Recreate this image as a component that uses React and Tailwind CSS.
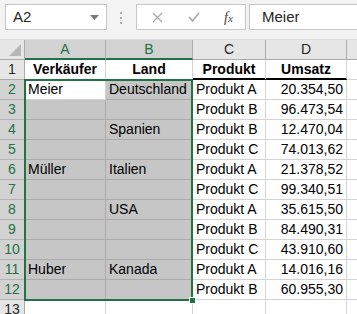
import React from 'react';

const rows = [
  ['Meier', 'Deutschland', 'Produkt A', '20.354,50'],
  ['', '', 'Produkt B', '96.473,54'],
  ['', 'Spanien', 'Produkt B', '12.470,04'],
  ['', '', 'Produkt C', '74.013,62'],
  ['Müller', 'Italien', 'Produkt A', '21.378,52'],
  ['', '', 'Produkt C', '99.340,51'],
  ['', 'USA', 'Produkt A', '35.615,50'],
  ['', '', 'Produkt B', '84.490,31'],
  ['', '', 'Produkt C', '43.910,60'],
  ['Huber', 'Kanada', 'Produkt A', '14.016,16'],
  ['', '', 'Produkt B', '60.955,30'],
];

const cols = ['A', 'B', 'C', 'D'];

const FormulaBar = () => (
  <div className="h-[40px] bg-[#f3f3f3] flex items-start pt-[4px] border-b border-[#dadada]">
    <div className="ml-[5px] w-[102px] h-[26px] border border-[#c6c6c6] bg-white flex items-center justify-between pl-[7px] pr-[7px]">
      <span className="text-[15px] text-[#262626]">A2</span>
      <svg width="9" height="5" viewBox="0 0 9 5"><path d="M0 0h9L4.5 5z" fill="#7a7a7a" /></svg>
    </div>
    <div className="ml-[13px] mt-[8px] flex flex-col gap-[3px]">
      <span className="w-[2px] h-[2px] bg-[#b0b0b0]" />
      <span className="w-[2px] h-[2px] bg-[#b0b0b0]" />
      <span className="w-[2px] h-[2px] bg-[#b0b0b0]" />
    </div>
    <div className="ml-[14px] w-[110px] h-[26px] border border-[#c6c6c6] bg-white flex items-center">
      <svg className="ml-[15px]" width="11" height="11" viewBox="0 0 11 11"><path d="M1 1l9 9M10 1l-9 9" stroke="#a8a8a8" strokeWidth="1.3" /></svg>
      <svg className="ml-[25px]" width="12" height="10" viewBox="0 0 12 10"><path d="M1 5l3.5 4L11 1" stroke="#a8a8a8" strokeWidth="1.6" fill="none" /></svg>
      <span className="ml-[24px] text-[14px] italic text-[#444] font-['Liberation_Serif',serif]">f<span className="text-[11px]">x</span></span>
    </div>
    <div className="ml-[3px] flex-1 h-[26px] border border-[#c6c6c6] border-r-0 bg-white flex items-center pl-[12px]">
      <span className="text-[15px] text-[#262626]">Meier</span>
    </div>
  </div>
);

export default function App() {
  return (
    <div className="w-[357px] h-[314px] overflow-hidden bg-white font-['Liberation_Sans',sans-serif] text-[14px] text-black">
      <FormulaBar />
      <div className="relative grid grid-cols-[25px_81px_87px_73px_81px_1fr] auto-rows-[20px]">
        <div className="bg-[#e6e6e6] border-r border-b border-[#ababab] relative">
          <svg className="absolute right-[3px] bottom-[3px]" width="12" height="12" viewBox="0 0 12 12"><path d="M12 0v12H0z" fill="#b7b7b7" /></svg>
        </div>
        {cols.map((c, i) => (
          <div
            key={c}
            className={
              i < 2
                ? 'bg-[#d2d2d2] text-[#217346] border-r border-[#ababab] border-b-2 border-b-[#217346] flex items-center justify-center'
                : 'bg-[#e6e6e6] text-[#262626] border-r border-b border-[#ababab] flex items-center justify-center'
            }
          >
            {c}
          </div>
        ))}
        <div className="bg-[#e6e6e6] border-b border-[#ababab]" />

        <div className="bg-[#e6e6e6] text-[#262626] border-r border-b border-[#ababab] flex items-center justify-center">1</div>
        <div className="border-r border-b border-[#d4d4d4] flex items-center justify-center font-bold">Verkäufer</div>
        <div className="border-r border-b border-[#d4d4d4] flex items-center justify-center font-bold">Land</div>
        <div className="border-r border-b-2 border-[#d4d4d4] border-b-black flex items-center justify-center font-bold">Produkt</div>
        <div className="border-r border-b-2 border-[#d4d4d4] border-b-black flex items-center justify-center font-bold">Umsatz</div>
        <div className="border-b border-[#d4d4d4]" />

        {rows.map((r, i) => (
          <React.Fragment key={i}>
            <div className="bg-[#d2d2d2] text-[#217346] border-r border-b border-[#b4b4b4] flex items-center justify-center">{i + 2}</div>
            <div className={`${i === 0 ? 'bg-white border-[#d4d4d4]' : 'bg-[#c6c6c6] border-[#ababab]'} border-r border-b flex items-center pl-[3px]`}>{r[0]}</div>
            <div className="bg-[#c6c6c6] border-r border-b border-[#ababab] flex items-center pl-[3px]">{r[1]}</div>
            <div className="border-r border-b border-[#d4d4d4] flex items-center pl-[3px]">{r[2]}</div>
            <div className="border-r border-b border-[#d4d4d4] flex items-center justify-end pr-[3px]">{r[3]}</div>
            <div className="border-b border-[#d4d4d4]" />
          </React.Fragment>
        ))}

        <div className="bg-[#e6e6e6] text-[#262626] border-r border-b border-[#ababab] flex items-center justify-center">13</div>
        <div className="border-r border-b border-[#d4d4d4]" />
        <div className="border-r border-b border-[#d4d4d4]" />
        <div className="border-r border-b border-[#d4d4d4]" />
        <div className="border-r border-b border-[#d4d4d4]" />
        <div className="border-b border-[#d4d4d4]" />

        <div className="absolute left-[24px] top-[39px] w-[169px] h-[222px] border-2 border-[#217346] pointer-events-none" />
        <div className="absolute left-[189px] top-[257px] w-[7px] h-[7px] bg-[#217346] border border-white" />
      </div>
    </div>
  );
}
